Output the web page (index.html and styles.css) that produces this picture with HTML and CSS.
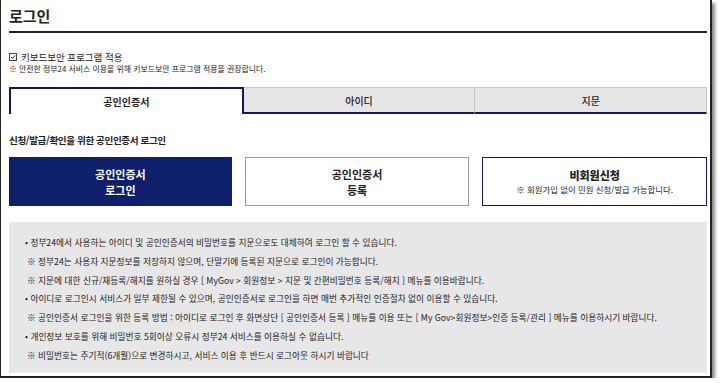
FILE: index.html
```html
<!DOCTYPE html>
<html lang="ko">
<head>
<meta charset="utf-8">
<link rel="stylesheet" href="styles.css">
</head>
<body>
<div class="frame">
  <h1 class="title">로그인</h1>
  <div class="notice">
    <label class="check"><span class="box"><svg width="8" height="8" viewBox="0 0 8 8"><path d="M1.5 4 L3.3 6 L6.7 1.8" fill="none" stroke="#222" stroke-width="1.3"/></svg></span>키보드보안 프로그램 적용</label>
    <p class="hint">※ 안전한 정부24 서비스 이용을 위해 키보드보안 프로그램 적용을 권장합니다.</p>
  </div>
  <div class="tabs">
    <div class="tab active">공인인증서</div>
    <div class="tab">아이디</div>
    <div class="tab">지문</div>
  </div>
  <h2 class="subtitle">신청/발급/확인을 위한 공인인증서 로그인</h2>
  <div class="buttons">
    <div class="btn primary">공인인증서<br>로그인</div>
    <div class="btn plain">공인인증서<br>등록</div>
    <div class="btn outline"><strong>비회원신청</strong><span class="small">※ 회원가입 없이 민원 신청/발급 가능합니다.</span></div>
  </div>
  <div class="info">
    <p class="dot">• 정부24에서 사용하는 아이디 및 공인인증서의 비밀번호를 지문으로도 대체하여 로그인 할 수 있습니다.</p>
    <p class="ref">※ 정부24는 사용자 지문정보를 저장하지 않으며, 단말기에 등록된 지문으로 로그인이 가능합니다.</p>
    <p class="ref">※ 지문에 대한 신규/재등록/해지를 원하실 경우 [ MyGov &gt; 회원정보 &gt; 지문 및 간편비밀번호 등록/해지 ] 메뉴를 이용바랍니다.</p>
    <p class="dot">• 아이디로 로그인시 서비스가 일부 제한될 수 있으며, 공인인증서로 로그인을 하면 매번 추가적인 인증절차 없이 이용할 수 있습니다.</p>
    <p class="ref">※ 공인인증서 로그인을 위한 등록 방법 : 아이디로 로그인 후 화면상단 [ 공인인증서 등록 ] 메뉴를 이용 또는 [ My Gov&gt;회원정보&gt;인증 등록/관리 ] 메뉴를 이용하시기 바랍니다.</p>
    <p class="dot">• 개인정보 보호를 위해 비밀번호 5회이상 오류시 정부24 서비스를 이용하실 수 없습니다.</p>
    <p class="ref">※ 비밀번호는 주기적(6개월)으로 변경하시고, 서비스 이용 후 반드시 로그아웃 하시기 바랍니다</p>
  </div>
</div>
</body>
</html>
```
FILE: styles.css
```css
* { box-sizing: border-box; }
html, body { margin: 0; padding: 0; background: #fff; }
body {
  font-family: "Noto Sans CJK KR", "Noto Sans", sans-serif;
  color: #222;
}
.frame {
  width: 712px;
  height: 378px;
  border-left: 1px solid #222;
  border-right: 2px solid #222;
  border-bottom: 2px solid #222;
  box-shadow: 3px 3px 3px rgba(0,0,0,0.45);
  padding: 0 3px 0 8px;
  overflow: hidden;
}
.title {
  margin: 0;
  padding-top: 6px;
  height: 33px;
  font-size: 15px;
  line-height: 20px;
  font-weight: 700;
  border-bottom: 2px solid #222;
}
.notice { padding-top: 18px; }
.check {
  display: flex;
  align-items: center;
  font-size: 9.5px;
  line-height: 12px;
  height: 12px;
}
.box {
  width: 8px; height: 8px;
  border: 1px solid #444;
  display: inline-flex;
  align-items: center;
  justify-content: center;
  margin-right: 4px;
  background: #fff;
}
.box svg { display: block; }
.hint {
  margin: 0;
  font-size: 7.9px;
  line-height: 12px;
}
.tabs {
  display: flex;
  margin-top: 12px;
  height: 27px;
}
.tab {
  flex: 1;
  display: flex;
  align-items: center;
  justify-content: center;
  font-size: 10px;
  font-weight: 500;
  background: #e5e5e5;
  border-top: 1px solid #c9c9c9;
  border-right: 1px solid #c9c9c9;
  border-bottom: 2px solid #15185a;
}
.tab.active {
  background: #fff;
  border: 2px solid #15185a;
  border-bottom: none;
  font-weight: 700;
}
.subtitle {
  margin: 19px 0 0;
  font-size: 9.6px;
  line-height: 14px;
  font-weight: 700;
  letter-spacing: -0.4px;
}
.buttons {
  display: flex;
  gap: 13px;
  margin-top: 10px;
  height: 49px;
}
.btn {
  flex: 1;
  display: flex;
  flex-direction: column;
  align-items: center;
  justify-content: center;
  text-align: center;
  font-size: 11px;
  line-height: 16px;
  font-weight: 700;
}
.btn.primary { background: #0e1f6b; color: #fff; }
.btn.plain { background: #fff; border: 1px solid #999; }
.btn.outline { background: #fff; border: 1px solid #15185a; }
.btn.outline strong { font-size: 11px; line-height: 15px; }
.small { font-size: 8.4px; line-height: 12px; font-weight: 400; }
.info {
  margin-top: 16px;
  background: #e8e7e7;
  height: 151px;
  padding: 12px 0 0 16px;
}
.info p {
  margin: 0;
  font-size: 8.7px;
  line-height: 18.8px;
  white-space: nowrap;
}
.info p.ref { padding-left: 2px; }
```
